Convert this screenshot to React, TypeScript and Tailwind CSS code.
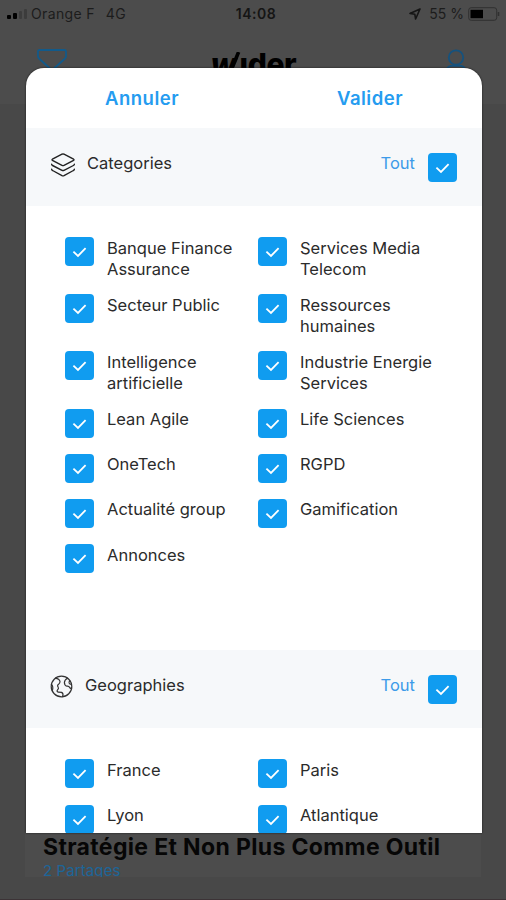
import { useState } from "react";

interface Item {
  label: string;
}

const CATEGORIES: Item[] = [
  { label: "Banque Finance Assurance" },
  { label: "Services Media Telecom" },
  { label: "Secteur Public" },
  { label: "Ressources humaines" },
  { label: "Intelligence artificielle" },
  { label: "Industrie Energie Services" },
  { label: "Lean Agile" },
  { label: "Life Sciences" },
  { label: "OneTech" },
  { label: "RGPD" },
  { label: "Actualité group" },
  { label: "Gamification" },
  { label: "Annonces" },
];

const GEOGRAPHIES: Item[] = [
  { label: "France" },
  { label: "Paris" },
  { label: "Lyon" },
  { label: "Atlantique" },
];

function Checkbox({ checked, label, onChange }: { checked: boolean; label: string; onChange: () => void }) {
  return (
    <button
      role="checkbox"
      aria-checked={checked}
      aria-label={label}
      onClick={onChange}
      className="flex size-[29px] shrink-0 items-center justify-center rounded-[4px] bg-[#109cf0]"
    >
      {checked && (
        <svg className="size-[15px]" viewBox="0 0 15 15" fill="none" stroke="white" strokeWidth="1.8">
          <path d="M1.4 7.6 6 12 13.6 4.2" />
        </svg>
      )}
    </button>
  );
}

function LayersIcon() {
  return (
    <svg className="h-[26px] w-[26px]" viewBox="0 0 26 26" fill="none" stroke="#222" strokeWidth="1.4" strokeLinejoin="round" strokeLinecap="round">
      <path d="M12 2.2Q13 1.7 14 2.2L23.6 7.2Q24.4 7.8 23.6 8.4L14 13.4Q13 13.9 12 13.4L2.4 8.4Q1.6 7.8 2.4 7.2Z" />
      <path d="M1.6 12.2Q1.6 13 2.6 13.5L12 18.3Q13 18.8 14 18.3L23.4 13.5Q24.4 13 24.4 12.2" />
      <path d="M1.6 17.2Q1.6 18 2.6 18.5L12 23.6Q13 24.1 14 23.6L23.4 18.5Q24.4 18 24.4 17.2" />
    </svg>
  );
}

function GlobeIcon() {
  return (
    <svg className="h-[23px] w-[23px]" viewBox="0 0 23 23" fill="none" stroke="#333" strokeWidth="1.2" strokeLinejoin="round" strokeLinecap="round">
      <circle cx="11.5" cy="11.5" r="10.3" />
      <path d="M5.4 3.2Q9.4 4 10 6.4 10.2 8 8.6 9.2 6.8 10.4 8.2 12.2 9 13.6 7.6 14.8 6.2 16.4 8.4 17.2L11.6 17.4Q13.8 18.6 12.6 21.6" />
      <path d="M1.4 9.4Q3.6 11 2.4 15.6" />
      <path d="M17.6 3.2Q14.6 4.6 14.4 7.4 14.4 10.4 17 11.2 18.8 11 19.8 12.6 20.6 14 21.6 13" />
      <path d="M19.8 5.6Q18.2 7.4 19.4 8.8L21.4 9.4" />
    </svg>
  );
}

function Logo() {
  return (
    <div className="relative mt-[-3px] ml-[-4px] flex text-[30px] leading-[36px] font-extrabold text-black">
      <i className="tracking-[-1px]">w</i>
      <span className="ml-[4px] tracking-[-0.4px]">ıder</span>
      <svg className="absolute top-[6px] left-[17px] h-[22px] w-[13px]" viewBox="0 0 13 22" stroke="black" strokeWidth="3.6">
        <path d="M10.6 0 2 21" />
      </svg>
    </div>
  );
}

function SectionHeader({ icon, title, checked, onToggle }: { icon: React.ReactNode; title: string; checked: boolean; onToggle: () => void }) {
  return (
    <div className="flex h-[78px] items-start justify-between bg-[#f6f8fa] pt-[25px] pr-[25px] pl-[24px]">
      <div className="flex items-start">
        {icon}
        <span className="text-[16.5px] leading-[21px]">{title}</span>
      </div>
      <div className="flex items-start gap-[13px]">
        <span className="text-[16.5px] leading-[21px] text-[#3d9be9]">Tout</span>
        <Checkbox checked={checked} label={title} onChange={onToggle} />
      </div>
    </div>
  );
}

function Section({ icon, title, items }: { icon: React.ReactNode; title: string; items: Item[] }) {
  const [selected, setSelected] = useState(items.map((i) => i.label));
  const all = selected.length === items.length;

  const toggle = (label: string) =>
    setSelected((prev) => (prev.includes(label) ? prev.filter((l) => l !== label) : [...prev, label]));

  return (
    <section>
      <SectionHeader
        icon={icon}
        title={title}
        checked={all}
        onToggle={() => setSelected(all ? [] : items.map((i) => i.label))}
      />
      <div className="grid grid-cols-[193px_193px] pt-[31px] pb-[61px] pl-[39px]">
        {items.map((item) => (
          <div key={item.label} className="flex min-h-[45.2px] items-start gap-[13px]">
            <Checkbox checked={selected.includes(item.label)} label={item.label} onChange={() => toggle(item.label)} />
            <span className="w-[140px] pt-[0.5px] pb-[14.7px] text-[16.5px] leading-[21px]">{item.label}</span>
          </div>
        ))}
      </div>
    </section>
  );
}

function StatusBar() {
  return (
    <div className="flex h-[27px] items-center text-[14px] text-[#1c1c1c]">
      <div className="flex w-[210px] items-center pl-[7px]">
        <div className="flex h-[10px] items-end gap-[2px]">
          <span className="h-[4px] w-[4px] rounded-[1px] bg-black" />
          <span className="h-[6px] w-[4px] rounded-[1px] bg-black" />
          <span className="h-[8px] w-[3px] rounded-[1px] bg-[#3c3c3c]" />
          <span className="h-[10px] w-[3px] rounded-[1px] bg-[#3c3c3c]" />
        </div>
        <span className="ml-[4px] tracking-[0.35px]">Orange F</span>
        <span className="ml-[11px] tracking-[0.3px]">4G</span>
      </div>
      <span className="w-[92px] text-center font-semibold tracking-[0.5px] text-[#151515]">14:08</span>
      <div className="flex flex-1 items-center justify-end pr-[5px]">
        <svg className="mr-[8px] size-[12px]" viewBox="0 0 12 12" fill="none" stroke="#151515" strokeWidth="1.6" strokeLinejoin="round">
          <path d="M11 1 1 5.4 5.8 6.2 6.6 11Z" />
        </svg>
        <span>55 %</span>
        <svg className="ml-[4px] h-[14px] w-[33px]" viewBox="0 0 33 14" fill="none">
          <rect x="0.7" y="0.7" width="28" height="12.6" rx="2.5" stroke="#303030" />
          <rect x="2.5" y="2.8" width="12.5" height="8.4" fill="black" />
          <path d="M30.5 5v4" stroke="#303030" strokeWidth="1.6" />
        </svg>
      </div>
    </div>
  );
}

export default function App() {
  return (
    <div className="relative flex h-[900px] w-[506px] flex-col overflow-hidden bg-[#484848] font-['Inter','Liberation_Sans',sans-serif]">
      <header className="h-[104px] bg-[#4c4c4c]">
        <StatusBar />
        <div className="flex h-[77px] items-start justify-between pt-[22px] pr-[38px] pl-[37px]">
          <svg className="h-[30px] w-[30px]" viewBox="0 0 30 30" fill="none" stroke="#125a8a" strokeWidth="1.8" strokeLinejoin="round">
            <path d="M2.5 1H27.5Q29 1 29 2.5V7Q29 8.5 28 9.5L16.5 20V27L13.5 29V20L2 9.5Q1 8.5 1 7V2.5Q1 1 2.5 1Z" />
          </svg>
          <Logo />
          <svg className="h-[32px] w-[24px]" viewBox="0 0 24 32" fill="none" stroke="#15527e" strokeWidth="1.8">
            <circle cx="12" cy="8.5" r="7.2" />
            <path d="M3 24V20Q3.5 17.5 7 16.8H17Q20.5 17.5 21 20V24" />
          </svg>
        </div>
      </header>

      <main className="flex flex-1 flex-col justify-end px-[25px] pb-[23px]">
        <article className="h-[46px] bg-[#4c4c4c] pt-[2px] pl-[18px]">
          <h2 className="text-[23px] leading-[28px] font-bold tracking-[0.35px] whitespace-nowrap text-[#060606]">
            Stratégie Et Non Plus Comme Outil
          </h2>
          <p className="text-[15px] leading-[20px] tracking-[0.1px] text-[#1d6598]">2 Partages</p>
        </article>
      </main>
      {/* bottom bar hides the end of the feed */}
      <div className="absolute inset-x-0 bottom-0 h-[23px] border-b border-[#3c3336] bg-[#484848]" />

      <div
        role="dialog"
        className="absolute top-[68px] left-[26px] h-[765px] w-[456px] overflow-hidden rounded-t-[18px] bg-white text-[#2b2b2b] shadow-[0_0_2px_#111]"
      >
        <div className="flex h-[60px] items-center justify-around pt-[2px] text-[18.5px] font-semibold tracking-[0.5px] text-[#259cf0]">
          <button>Annuler</button>
          <button>Valider</button>
        </div>
        <Section
          icon={<span className="mr-[11px] -mt-px"><LayersIcon /></span>}
          title="Categories"
          items={CATEGORIES}
        />
        <Section
          icon={<span className="mr-[12px]"><GlobeIcon /></span>}
          title="Geographies"
          items={GEOGRAPHIES}
        />
      </div>
    </div>
  );
}
